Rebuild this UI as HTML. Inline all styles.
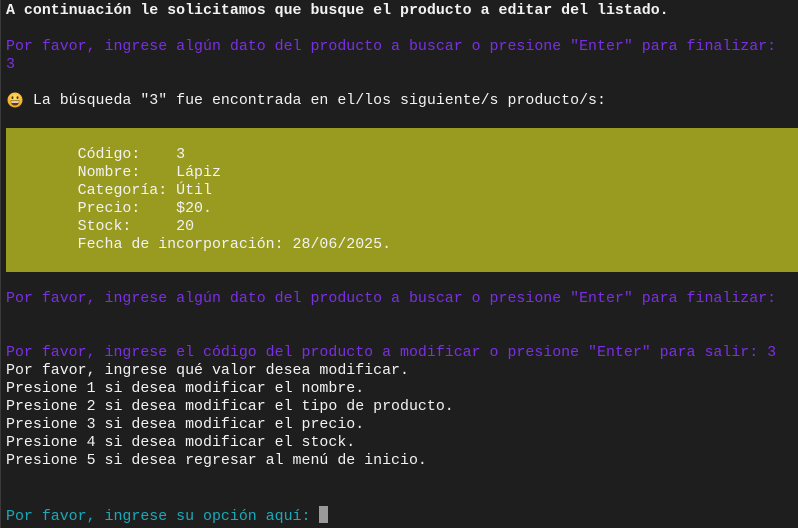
<!DOCTYPE html>
<html><head><meta charset="utf-8"><style>
html,body{margin:0;padding:0;background:#1e1e1e;width:798px;height:528px;overflow:hidden}
body{position:relative}
.bl{position:absolute;left:0;top:0;width:1px;height:528px;background:#3a3a3a}
.box{position:absolute;left:6px;top:128px;width:792px;height:144px;background:#999b21}
pre{position:absolute;left:6px;top:2px;margin:0;font-family:"Liberation Mono",monospace;font-size:14.93px;line-height:18px;color:#f2f2f2;white-space:pre}
.p{color:#7b2fe3}.c{color:#19a9b9}.b{font-weight:bold}
.cur{display:inline-block;width:9px;height:17px;background:#9a9a9a;vertical-align:-3px}
svg{position:absolute}
</style></head><body>
<div class="bl"></div>
<div class="box"></div>
<svg style="left:7px;top:92px" width="16" height="16" viewBox="0 0 16 16"><defs><radialGradient id="g" cx="50%" cy="35%" r="65%"><stop offset="0" stop-color="#ffe36a"/><stop offset="1" stop-color="#f2a51a"/></radialGradient></defs><circle cx="8" cy="8" r="7.5" fill="url(#g)"/><ellipse cx="5.5" cy="5.6" rx="1" ry="1.4" fill="#5a3a10"/><ellipse cx="10.5" cy="5.6" rx="1" ry="1.4" fill="#5a3a10"/><path d="M3.5 8.5 L12.5 8.5 Q12 13.5 8 13.5 Q4 13.5 3.5 8.5 Z" fill="#5a3a10"/><path d="M4 9.2 L12 9.2 L11.6 10.8 L4.4 10.8 Z" fill="#fff"/></svg>
<pre><span class="b">A continuación le solicitamos que busque el producto a editar del listado.</span>

<span class="p">Por favor, ingrese algún dato del producto a buscar o presione "Enter" para finalizar:
3</span>

   La búsqueda "3" fue encontrada en el/los siguiente/s producto/s:


        Código:    3
        Nombre:    Lápiz
        Categoría: Útil
        Precio:    $20.
        Stock:     20
        Fecha de incorporación: 28/06/2025.


<span class="p">Por favor, ingrese algún dato del producto a buscar o presione "Enter" para finalizar:</span>


<span class="p">Por favor, ingrese el código del producto a modificar o presione "Enter" para salir: 3</span>
Por favor, ingrese qué valor desea modificar.
Presione 1 si desea modificar el nombre.
Presione 2 si desea modificar el tipo de producto.
Presione 3 si desea modificar el precio.
Presione 4 si desea modificar el stock.
Presione 5 si desea regresar al menú de inicio.


<span class="c">Por favor, ingrese su opción aquí: </span><span class="cur"></span></pre>
</body></html>
